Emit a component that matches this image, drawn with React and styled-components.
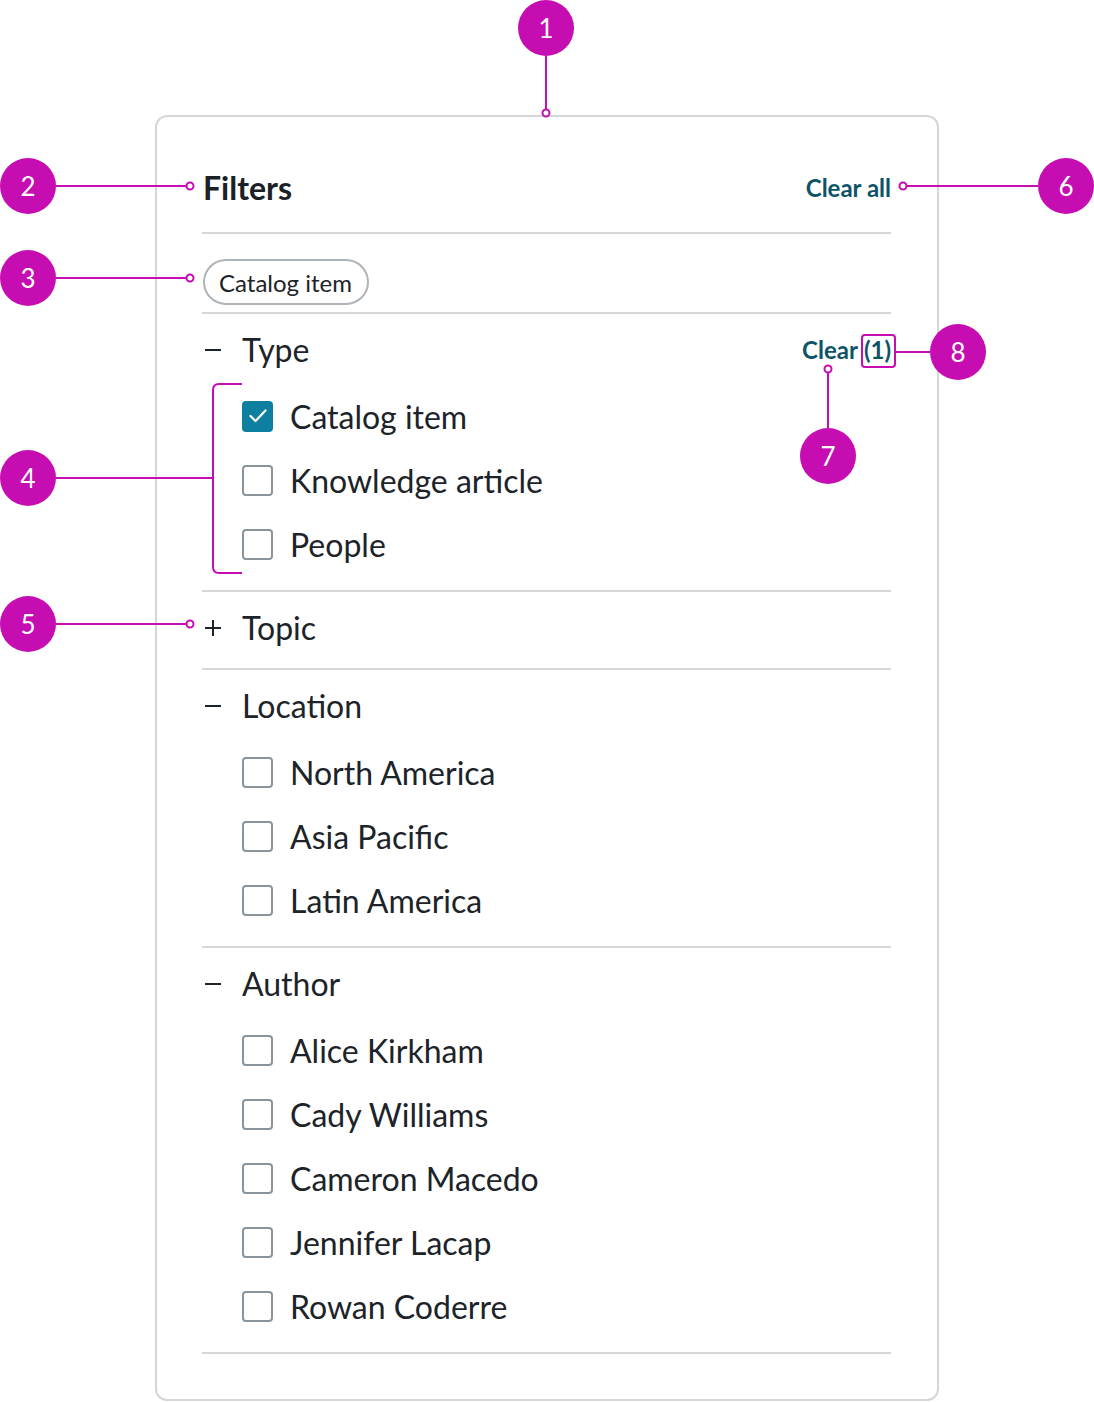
import React from "react";
import styled, { createGlobalStyle } from "styled-components";

const GlobalStyle = createGlobalStyle`
  html, body { margin: 0; padding: 0; background: #ffffff; }
  body { font-family: Lato, "Open Sans", "Liberation Sans", sans-serif; color: #1c2329; }
  * { box-sizing: border-box; }
`;

const MAGENTA = "#c60db1";

const Page = styled.div`
  position: relative;
  width: 1094px;
  min-height: 1402px;
  padding: 115px 0 0 155px;
`;

const Card = styled.section`
  width: 784px;
  height: 1286px;
  border: 2px solid #d3d7da;
  border-radius: 12px;
  padding: 41px 46px 0 45px;
  background: #fff;
`;

const HeaderRow = styled.div`
  display: flex;
  align-items: center;
  justify-content: space-between;
  height: 76px;
  padding-bottom: 14px;
  border-bottom: 2px solid #d3d7da;
`;

const Title = styled.h2`
  margin: 0 0 0 1px;
  font-size: 32px;
  font-weight: 700;
  color: #1a2127;
  line-height: 38px;
`;

const LinkButton = styled.button`
  border: none;
  background: none;
  padding: 0;
  font-family: inherit;
  font-size: 24px;
  font-weight: 700;
  color: #0e5467;
  line-height: 30px;
  cursor: pointer;
  display: inline-flex;
  gap: ${(p) => (p.$gap ? p.$gap : "0")};
`;

const ChipRow = styled.div`
  display: flex;
  padding: 25px 0 7px 1px;
  border-bottom: 2px solid #d3d7da;
`;

const Chip = styled.span`
  display: inline-flex;
  align-items: center;
  height: 46px;
  padding: 0 15px 0 14px;
  border: 2px solid #aeb4b9;
  border-radius: 23px;
  font-size: 24px;
  color: #1c2329;
`;

const Section = styled.div`
  padding: 12px 0 ${(p) => (p.$collapsed ? "16px" : "14px")};
  border-bottom: 2px solid #d3d7da;
`;

const SectionHeader = styled.div`
  display: flex;
  align-items: center;
  height: 48px;
`;

const Toggle = styled.span`
  display: inline-flex;
  align-items: center;
  width: 40px;
  padding-left: 3px;
  color: #1c2329;
`;

const SectionTitle = styled.span`
  font-size: 32px;
  color: #1c2329;
  line-height: 38px;
`;

const Spacer = styled.span`
  flex: 1;
`;

const List = styled.ul`
  list-style: none;
  margin: 10px 0 0;
  padding: 0 0 0 40px;
`;

const Item = styled.li`
  display: flex;
  align-items: center;
  gap: 17px;
  height: 64px;
  font-size: 32px;
  color: #1c2329;
`;

const Box = styled.span`
  width: 31px;
  height: 31px;
  border-radius: 4px;
  border: 2px solid ${(p) => (p.$checked ? "#0f7fa1" : "#8a949b")};
  background: ${(p) => (p.$checked ? "#0f7fa1" : "#fff")};
  display: inline-flex;
  align-items: center;
  justify-content: center;
  flex: none;
`;

const Overlay = styled.svg`
  position: absolute;
  left: 0;
  top: 0;
  pointer-events: none;
`;

const Badge = styled.div`
  position: absolute;
  width: 56px;
  height: 56px;
  border-radius: 50%;
  background: ${MAGENTA};
  color: #fff;
  font-family: Lato, "Open Sans", sans-serif;
  font-size: 26px;
  display: flex;
  align-items: center;
  justify-content: center;
  line-height: 1;
`;

const Minus = () => (
  <svg width="16" height="16" viewBox="0 0 16 16">
    <line x1="0" y1="8" x2="16" y2="8" stroke="#1c2329" strokeWidth="2" />
  </svg>
);

const Plus = () => (
  <svg width="16" height="16" viewBox="0 0 16 16">
    <line x1="0" y1="8" x2="16" y2="8" stroke="#1c2329" strokeWidth="2" />
    <line x1="8" y1="0" x2="8" y2="16" stroke="#1c2329" strokeWidth="2" />
  </svg>
);

const Check = () => (
  <svg width="18" height="14" viewBox="0 0 18 14">
    <path d="M1.5 7 L6.5 12 L16.5 1.5" fill="none" stroke="#fff" strokeWidth="2.2" strokeLinecap="round" strokeLinejoin="round" />
  </svg>
);

const sections = [
  { title: "Type", open: true, clear: true, items: [["Catalog item", true], ["Knowledge article"], ["People"]] },
  { title: "Topic", open: false, items: [] },
  { title: "Location", open: true, items: [["North America"], ["Asia Pacific"], ["Latin America"]] },
  {
    title: "Author",
    open: true,
    items: [["Alice Kirkham"], ["Cady Williams"], ["Cameron Macedo"], ["Jennifer Lacap"], ["Rowan Coderre"]],
  },
];

const badges = [
  [1, 546, 28],
  [2, 28, 186],
  [3, 28, 278],
  [4, 28, 478],
  [5, 28, 624],
  [6, 1066, 186],
  [7, 828, 456],
  [8, 958, 352],
];

const Ring = ({ cx, cy }) => <circle cx={cx} cy={cy} r="3.5" fill="#fff" stroke={MAGENTA} strokeWidth="2" />;

export default function App() {
  return (
    <>
      <GlobalStyle />
      <Page>
        <Card>
          <HeaderRow>
            <Title>Filters</Title>
            <LinkButton>Clear all</LinkButton>
          </HeaderRow>
          <ChipRow>
            <Chip>Catalog item</Chip>
          </ChipRow>
          {sections.map((s) => (
            <Section key={s.title} $collapsed={!s.open}>
              <SectionHeader>
                <Toggle>{s.open ? <Minus /> : <Plus />}</Toggle>
                <SectionTitle>{s.title}</SectionTitle>
                <Spacer />
                {s.clear && (
                  <LinkButton $gap="6px">
                    <span>Clear</span>
                    <span>(1)</span>
                  </LinkButton>
                )}
              </SectionHeader>
              {s.open && (
                <List>
                  {s.items.map(([label, checked]) => (
                    <Item key={label}>
                      <Box $checked={checked}>{checked && <Check />}</Box>
                      {label}
                    </Item>
                  ))}
                </List>
              )}
            </Section>
          ))}
        </Card>

        <Overlay width="1094" height="1402" viewBox="0 0 1094 1402">
          <g stroke={MAGENTA} strokeWidth="2" fill="none">
            <line x1="546" y1="56" x2="546" y2="110" />
            <line x1="56" y1="186" x2="187" y2="186" />
            <line x1="56" y1="278" x2="187" y2="278" />
            <line x1="56" y1="478" x2="213" y2="478" />
            <path d="M242 384 H219 Q213 384 213 390 V567 Q213 573 219 573 H242" />
            <line x1="56" y1="624" x2="187" y2="624" />
            <line x1="906" y1="186" x2="1038" y2="186" />
            <line x1="828" y1="372" x2="828" y2="428" />
            <line x1="895" y1="352" x2="930" y2="352" />
            <rect x="862" y="335" width="33" height="32" rx="3" />
          </g>
          <Ring cx={546} cy={113} />
          <Ring cx={190} cy={186} />
          <Ring cx={190} cy={278} />
          <Ring cx={190} cy={624} />
          <Ring cx={903} cy={186} />
          <Ring cx={828} cy={369} />
        </Overlay>
        {badges.map(([n, x, y]) => (
          <Badge key={n} style={{ left: x - 28, top: y - 28 }}>
            {n}
          </Badge>
        ))}
      </Page>
    </>
  );
}
